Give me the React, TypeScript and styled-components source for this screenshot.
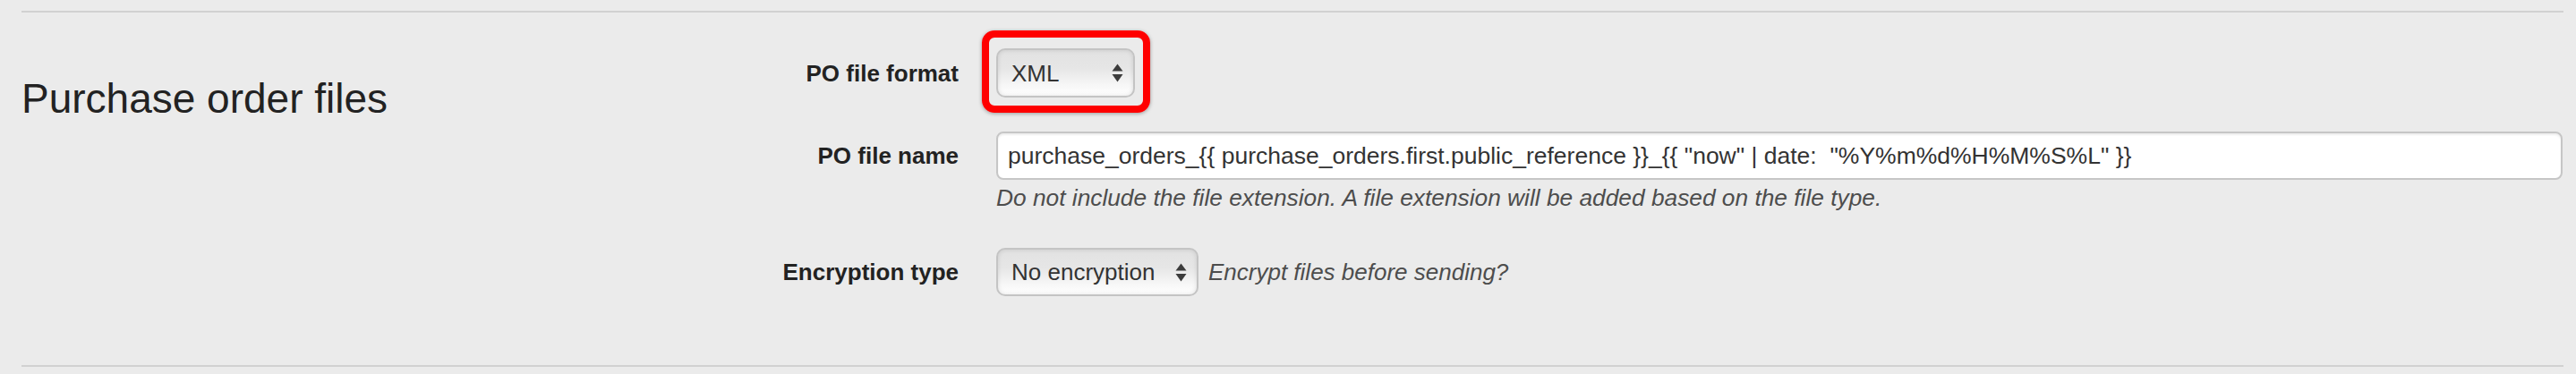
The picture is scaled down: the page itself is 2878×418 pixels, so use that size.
import React from "react";
import styled, { createGlobalStyle } from "styled-components";

const GlobalStyle = createGlobalStyle`
  html, body {
    margin: 0;
    padding: 0;
    background: #ebebeb;
  }
  body {
    font-family: "Liberation Sans", Arial, Helvetica, sans-serif;
    color: #222;
  }
`;

const Page = styled.div`
  min-height: 418px;
  padding: 12px 14px 0 24px;
  box-sizing: border-box;
`;

const Section = styled.section`
  display: grid;
  grid-template-columns: 830px 1fr;
  align-items: start;
  border-top: 2px solid #d1d1d1;
  border-bottom: 2px solid #d1d1d1;
  padding: 40px 1px 77px 0;
`;

const Heading = styled.h2`
  margin: 28px 0 0;
  font-size: 46px;
  line-height: 56px;
  font-weight: 400;
  color: #222;
`;

const Form = styled.div`
  display: flex;
  flex-direction: column;
  gap: 38px;
`;

const FieldRow = styled.div`
  display: grid;
  grid-template-columns: 217px 1fr;
  column-gap: 42px;
  align-items: center;
`;

const Label = styled.label`
  text-align: right;
  font-size: 26px;
  line-height: 36px;
  font-weight: 700;
  color: #222;
  white-space: nowrap;
`;

const Controls = styled.div`
  display: flex;
  align-items: center;
  gap: 11px;
`;

const HelpBlock = styled.div`
  grid-column: 2;
  margin-top: 2px;
  font-size: 26.3px;
  line-height: 36px;
  font-style: italic;
  color: #4d4d4d;
`;

const HelpInline = styled.span`
  font-size: 26px;
  line-height: 36px;
  font-style: italic;
  color: #4d4d4d;
  white-space: nowrap;
`;

const Highlight = styled.div`
  position: relative;
  display: inline-flex;
`;

const RedBox = styled.div`
  position: absolute;
  top: -20px;
  left: -16px;
  right: -17px;
  bottom: -17px;
  border: 8px solid #ff0000;
  border-radius: 14px;
  box-shadow: 0 1px 4px rgba(0, 0, 0, 0.35);
  pointer-events: none;
`;

const SelectBox = styled.div<{ $width: number; $height: number }>`
  box-sizing: border-box;
  width: ${(p) => p.$width}px;
  height: ${(p) => p.$height}px;
  display: flex;
  align-items: center;
  justify-content: space-between;
  padding: 0 11px 0 15px;
  border: 2px solid #c4c4c4;
  border-radius: 10px;
  background: linear-gradient(
    to bottom,
    #e2e2e2 0%,
    #e6e6e6 40%,
    #f6f6f6 75%,
    #ffffff 100%
  );
  box-shadow: inset 0 0 5px rgba(0, 0, 0, 0.12);
  font-size: 26px;
  line-height: 36px;
  color: #333;
  cursor: default;
`;

const TextInput = styled.input`
  box-sizing: border-box;
  width: 100%;
  height: 54px;
  padding: 0 11px;
  border: 2px solid #c6c6c6;
  border-radius: 8px;
  background: #fff;
  box-shadow: inset 0 2px 2px rgba(0, 0, 0, 0.07);
  font-family: "Liberation Sans", Arial, Helvetica, sans-serif;
  font-size: 26.5px;
  color: #333;
  outline: none;
`;

function UpDownArrows() {
  return (
    <svg width="13" height="21" viewBox="0 0 13 21" aria-hidden="true">
      <path d="M6.5 0.5 L12.5 8.5 L0.5 8.5 Z" fill="#3c3c3c" />
      <path d="M0.5 12 L12.5 12 L6.5 20.5 Z" fill="#3c3c3c" />
    </svg>
  );
}

function Select({ value, width, height }: { value: string; width: number; height: number }) {
  return (
    <SelectBox $width={width} $height={height} role="combobox">
      <span>{value}</span>
      <UpDownArrows />
    </SelectBox>
  );
}

export default function App() {
  return (
    <>
      <GlobalStyle />
      <Page>
        <Section>
          <Heading>Purchase order files</Heading>

          <Form>
            {/* PO file format */}
            <FieldRow>
              <Label>PO file format</Label>
              <Controls>
                <Highlight>
                  <Select value="XML" width={155} height={55} />
                  <RedBox />
                </Highlight>
              </Controls>
            </FieldRow>

            {/* PO file name */}
            <FieldRow>
              <Label>PO file name</Label>
              <TextInput
                type="text"
                defaultValue={
                  'purchase_orders_{{ purchase_orders.first.public_reference }}_{{ "now" | date:  "%Y%m%d%H%M%S%L" }}'
                }
              />
              <HelpBlock>
                Do not include the file extension. A file extension will be added based on the file type.
              </HelpBlock>
            </FieldRow>

            {/* Encryption type */}
            <FieldRow>
              <Label>Encryption type</Label>
              <Controls>
                <Select value="No encryption" width={226} height={54} />
                <HelpInline>Encrypt files before sending?</HelpInline>
              </Controls>
            </FieldRow>
          </Form>
        </Section>
      </Page>
    </>
  );
}
